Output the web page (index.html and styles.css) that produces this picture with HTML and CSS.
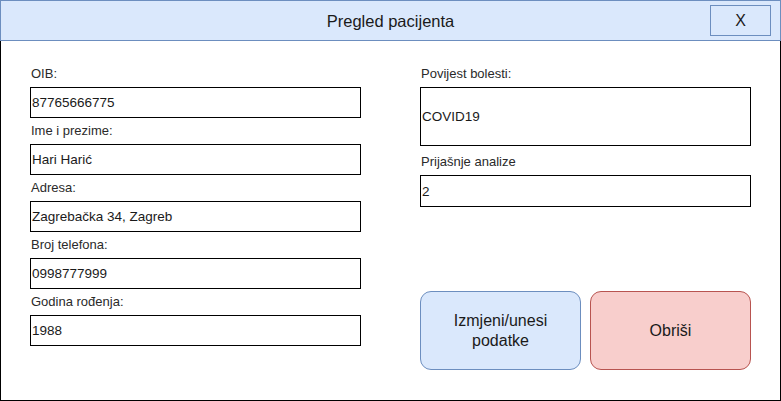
FILE: index.html
```html
<!DOCTYPE html>
<html lang="hr">
<head>
<meta charset="utf-8">
<title>Pregled pacijenta</title>
<link rel="stylesheet" href="styles.css">
</head>
<body>
<div class="window">
  <div class="titlebar">
    <span></span>
    <div class="title">Pregled pacijenta</div>
    <div class="close">X</div>
  </div>
  <div class="content">
    <div class="col col-left">
      <div class="label">OIB:</div>
      <div class="field">87765666775</div>
      <div class="label">Ime i prezime:</div>
      <div class="field">Hari Harić</div>
      <div class="label">Adresa:</div>
      <div class="field">Zagrebačka 34, Zagreb</div>
      <div class="label">Broj telefona:</div>
      <div class="field">0998777999</div>
      <div class="label">Godina rođenja:</div>
      <div class="field">1988</div>
    </div>
    <div class="col col-right">
      <div class="label">Povijest bolesti:</div>
      <div class="field field-tall">COVID19</div>
      <div class="label label-spaced">Prijašnje analize</div>
      <div class="field field-short">2</div>
      <div class="actions">
        <div class="btn btn-blue">Izmjeni/unesi<br>podatke</div>
        <div class="btn btn-red">Obriši</div>
      </div>
    </div>
  </div>
</div>
</body>
</html>
```
FILE: styles.css
```css
* { box-sizing: border-box; }
html, body { margin: 0; padding: 0; background: #fff; }
body { font-family: "Liberation Sans", Arial, sans-serif; color: #111; }

.window {
  width: 781px;
  height: 401px;
  display: flex;
  flex-direction: column;
}

.titlebar {
  height: 41px;
  background: #dae8fc;
  border: 1px solid #6c8ebf;
  display: grid;
  grid-template-columns: 1fr auto 1fr;
  align-items: center;
}
.title {
  font-size: 16.5px;
  line-height: 20px;
  color: #1a1a1a;
}
.close {
  justify-self: end;
  margin-right: 9px;
  width: 61px;
  height: 31px;
  border: 1px solid #6c8ebf;
  display: flex;
  align-items: center;
  justify-content: center;
  font-size: 16px;
  color: #1a1a1a;
}

.content {
  flex: 1;
  border: 1px solid #000;
  border-top: none;
  display: flex;
  padding: 20px 0 0 29px;
}

.col { width: 331px; display: flex; flex-direction: column; }
.col-right { margin-left: 59px; }

.label {
  height: 26px;
  line-height: 26px;
  font-size: 13px;
  padding-left: 1px;
  color: #2a2a2a;
}
.label-spaced { margin-top: 3px; }

.field {
  height: 31px;
  border: 1px solid #000;
  font-size: 13.5px;
  padding-left: 1px;
  display: flex;
  align-items: center;
  color: #1a1a1a;
}
.field-tall { height: 59px; }
.field-short { height: 32px; }

.actions {
  display: flex;
  gap: 9px;
  margin-top: 84px;
}
.btn {
  width: 161px;
  height: 79px;
  border-radius: 11px;
  display: flex;
  align-items: center;
  justify-content: center;
  text-align: center;
  font-size: 16px;
  line-height: 20px;
  color: #1a1a1a;
}
.btn-blue { background: #dae8fc; border: 1px solid #6c8ebf; }
.btn-red { background: #f8cecc; border: 1px solid #b85450; }
```
